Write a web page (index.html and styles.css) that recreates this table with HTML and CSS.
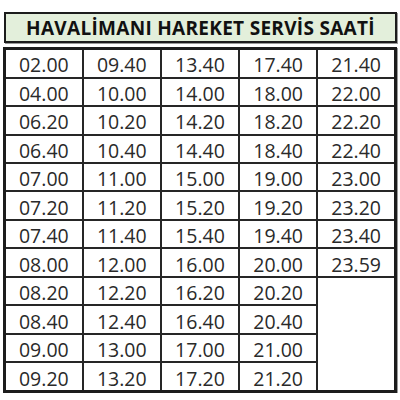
FILE: index.html
```html
<!DOCTYPE html>
<html>
<head>
<meta charset="utf-8">
<link rel="stylesheet" href="styles.css">
</head>
<body>
<div class="page">
  <div class="title">HAVALİMANI HAREKET SERVİS SAATİ</div>
  <table class="times">
    <tr><td>02.00</td><td>09.40</td><td>13.40</td><td>17.40</td><td>21.40</td></tr>
    <tr><td>04.00</td><td>10.00</td><td>14.00</td><td>18.00</td><td>22.00</td></tr>
    <tr><td>06.20</td><td>10.20</td><td>14.20</td><td>18.20</td><td>22.20</td></tr>
    <tr><td>06.40</td><td>10.40</td><td>14.40</td><td>18.40</td><td>22.40</td></tr>
    <tr><td>07.00</td><td>11.00</td><td>15.00</td><td>19.00</td><td>23.00</td></tr>
    <tr><td>07.20</td><td>11.20</td><td>15.20</td><td>19.20</td><td>23.20</td></tr>
    <tr><td>07.40</td><td>11.40</td><td>15.40</td><td>19.40</td><td>23.40</td></tr>
    <tr><td>08.00</td><td>12.00</td><td>16.00</td><td>20.00</td><td>23.59</td></tr>
    <tr><td>08.20</td><td>12.20</td><td>16.20</td><td>20.20</td><td class="empty" rowspan="4"></td></tr>
    <tr><td>08.40</td><td>12.40</td><td>16.40</td><td>20.40</td></tr>
    <tr><td>09.00</td><td>13.00</td><td>17.00</td><td>21.00</td></tr>
    <tr><td>09.20</td><td>13.20</td><td>17.20</td><td>21.20</td></tr>
  </table>
</div>
</body>
</html>
```
FILE: styles.css
```css
html, body {
  margin: 0;
  padding: 0;
  background: #ffffff;
}
.page {
  padding: 12px 3px 0 3px;
  display: flex;
  flex-direction: column;
  gap: 4px;
  font-family: "Open Sans", "DejaVu Sans", sans-serif;
}
.title {
  margin-left: 1px;
  width: 389px;
  height: 27px;
  border: 2px solid #1c1c1c;
  background: #e3efdb;
  color: #111111;
  font-weight: 700;
  font-size: 19px;
  letter-spacing: 0.3px;
  line-height: 29px;
  text-align: center;
  white-space: nowrap;
  box-shadow: 1px 1px 0 #9a9a9a;
}
.times {
  width: 394px;
  height: 346px;
  border-collapse: collapse;
  border: 3px solid #1c1c1c;
  table-layout: fixed;
  box-shadow: 1px 1px 0 #9a9a9a;
}
.times td {
  border: 2px solid #262626;
  height: 20px;
  padding: 4px 0 0 0;
  text-align: center;
  vertical-align: middle;
  font-size: 19.5px;
  line-height: 20px;
  color: #2a2a2a;
}
.times td.empty {
  padding: 0;
}
```
